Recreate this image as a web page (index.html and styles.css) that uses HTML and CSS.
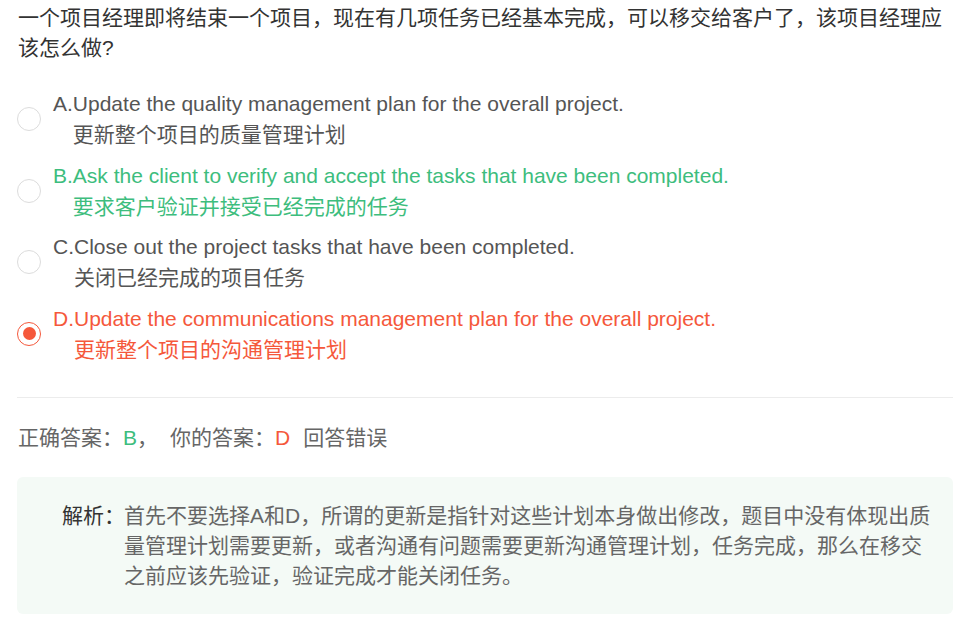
FILE: index.html
```html
<!DOCTYPE html>
<html lang="zh-CN">
<head>
<meta charset="utf-8">
<title>题目</title>
<link rel="stylesheet" href="styles.css">
</head>
<body>
<div class="page">
  <div class="question">一个项目经理即将结束一个项目，现在有几项任务已经基本完成，可以移交给客户了，该项目经理应该怎么做?</div>
  <div class="options">
    <div class="option">
      <span class="radio"></span>
      <span class="letter">A.</span>
      <div class="content">
        <div>Update the quality management plan for the overall project.</div>
        <div>更新整个项目的质量管理计划</div>
      </div>
    </div>
    <div class="option correct">
      <span class="radio"></span>
      <span class="letter">B.</span>
      <div class="content">
        <div>Ask the client to verify and accept the tasks that have been completed.</div>
        <div>要求客户验证并接受已经完成的任务</div>
      </div>
    </div>
    <div class="option">
      <span class="radio"></span>
      <span class="letter">C.</span>
      <div class="content">
        <div>Close out the project tasks that have been completed.</div>
        <div>关闭已经完成的项目任务</div>
      </div>
    </div>
    <div class="option wrong">
      <span class="radio checked"></span>
      <span class="letter">D.</span>
      <div class="content">
        <div>Update the communications management plan for the overall project.</div>
        <div>更新整个项目的沟通管理计划</div>
      </div>
    </div>
  </div>
  <div class="divider"></div>
  <div class="answer">正确答案：<span class="green">B</span>，<span class="sep">你的答案：</span><span class="red">D</span><span class="sep">回答错误</span></div>
  <div class="analysis">
    <span class="label">解析：</span>
    <div class="analysis-text">首先不要选择A和D，所谓的更新是指针对这些计划本身做出修改，题目中没有体现出质量管理计划需要更新，或者沟通有问题需要更新沟通管理计划，任务完成，那么在移交之前应该先验证，验证完成才能关闭任务。</div>
  </div>
</div>
</body>
</html>
```

FILE: styles.css
```css
* { box-sizing: border-box; }
html, body { margin: 0; padding: 0; background: #fff; }
body {
  font-family: "Liberation Sans", "Noto Sans CJK SC", sans-serif;
  color: #333;
}
.page {
  width: 953px;
  padding: 3px 0 0 17px;
}
.question {
  font-size: 21px;
  line-height: 29.5px;
  color: #333;
  padding-left: 1px;
}
.options {
  margin-top: 26px;
  display: flex;
  flex-direction: column;
  gap: 9.67px;
}
.option {
  display: flex;
  align-items: center;
  font-size: 21px;
  line-height: 31px;
  color: #555;
}
.radio {
  flex: none;
  width: 24px;
  height: 24px;
  border: 1.5px solid #dcdcdc;
  border-radius: 50%;
  margin-right: 12px;
  display: flex;
  align-items: center;
  justify-content: center;
}
.radio.checked { border-color: #f5583b; }
.radio.checked::after {
  content: "";
  width: 13px;
  height: 13px;
  border-radius: 50%;
  background: #f5583b;
}
.letter { align-self: flex-start; }
.correct { color: #3dbd7d; }
.wrong { color: #f5583b; }
.divider {
  height: 1px;
  background: #ececec;
  margin-top: 32px;
}
.answer {
  margin-top: 25px;
  font-size: 21px;
  line-height: 30px;
  color: #666;
  padding-left: 1px;
}
.green { color: #3dbd7d; }
.red { color: #f5583b; }
.sep { margin-left: 12px; }
.answer .red + .sep { margin-left: 13px; }
.analysis {
  margin-top: 24px;
  background: #f4faf6;
  border-radius: 6px;
  padding: 24px 16px 23px 45px;
  display: flex;
  font-size: 21px;
  line-height: 30px;
  color: #666;
}
.label { flex: none; color: #333; margin-right: -1px; }
.analysis-text { flex: 1; }
```
